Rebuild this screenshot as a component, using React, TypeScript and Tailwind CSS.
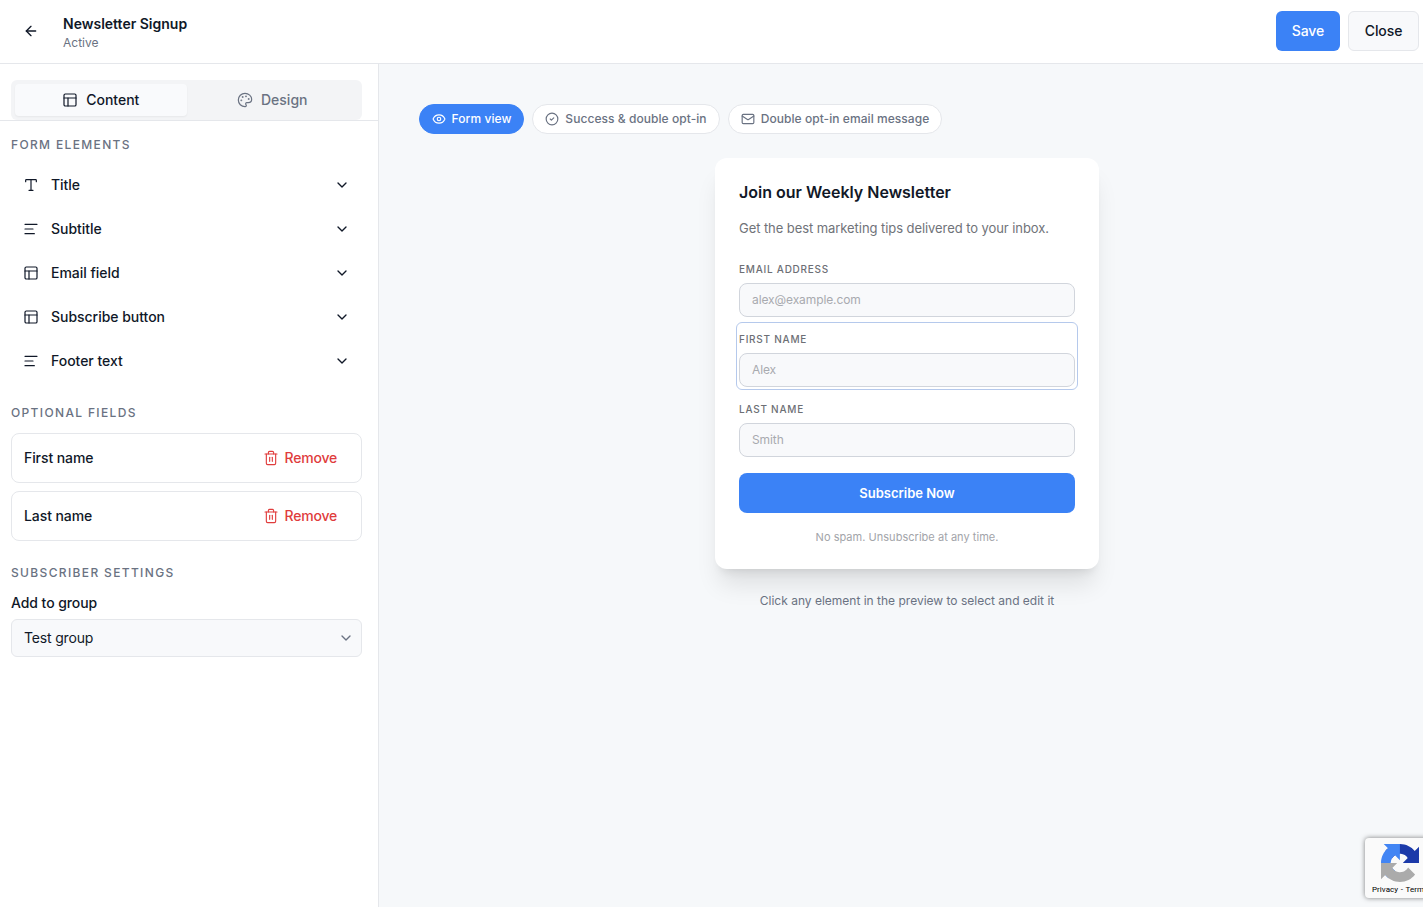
import { useState } from "react"
import {
	ArrowLeft,
	ChevronDown,
	CircleCheck,
	Eye,
	Mail,
	Palette,
	PanelsTopLeft,
	TextAlignStart,
	Trash2,
	Type,
} from "lucide-react"

const elements = [
	{ label: "Title", icon: Type },
	{ label: "Subtitle", icon: TextAlignStart },
	{ label: "Email field", icon: PanelsTopLeft },
	{ label: "Subscribe button", icon: PanelsTopLeft },
	{ label: "Footer text", icon: TextAlignStart },
]

const views = [
	{ label: "Form view", icon: Eye, width: "w-[105px]" },
	{ label: "Success & double opt-in", icon: CircleCheck, width: "w-[188px]" },
	{ label: "Double opt-in email message", icon: Mail, width: "w-[214px]" },
]

function SectionTitle({ children }: { children: React.ReactNode }) {
	return (
		<h2 className="text-xs leading-4 font-medium tracking-[1.35px] text-gray-500 uppercase">
			{children}
		</h2>
	)
}

function OptionalField({ label }: { label: string }) {
	return (
		<div className="flex h-[50px] items-center justify-between rounded-lg border border-gray-200 pr-6 pl-3">
			<span className="tracking-[-0.08px]">{label}</span>
			<button className="flex items-center gap-[5px] tracking-[-0.2px] text-[#e03c3c]">
				<Trash2 size={16} strokeWidth={1.7} />
				Remove
			</button>
		</div>
	)
}

function PreviewField({
	label,
	placeholder,
	active,
}: {
	label: string
	placeholder: string
	active?: boolean
}) {
	return (
		<div
			className={`-mx-[3px] h-[68px] rounded-md border px-[2px] pt-[9px] ${
				active ? "border-[#b5c9ec]" : "border-transparent"
			}`}
		>
			<div className="mb-[6px] text-[10px] leading-[15px] font-medium tracking-[0.75px] text-[#6d6f75] uppercase">
				{label}
			</div>
			<input
				className="block h-[34px] w-full rounded-lg border border-gray-300 bg-[#f8f9fb] px-3 pb-[2px] text-xs tracking-[-0.1px] outline-none placeholder:text-[#a8aaaf]"
				placeholder={placeholder}
			/>
		</div>
	)
}

function Recaptcha() {
	return (
		<div className="absolute top-[838px] left-[1365px] h-[60px] w-[70px] rounded-l-sm bg-[#fafafa] shadow-[0_0_5px_rgba(0,0,0,0.5)]">
			<svg className="absolute top-[6px] left-4" width="38" height="38" viewBox="0 0 64 64">
				<path
					fill="#1c3aa9"
					d="M64 31.955l-.033-1.37V4.687l-7.16 7.16C50.948 4.674 42.033.093 32.05.093c-10.4 0-19.622 4.96-25.458 12.64l11.736 11.86a15.55 15.55 0 0 1 4.754-5.334c2.05-1.6 4.952-2.906 8.968-2.906.485 0 .86.057 1.135.163 4.976.393 9.288 3.14 11.828 7.124l-8.307 8.307L64 31.953"
				/>
				<path
					fill="#4285f4"
					d="M31.862.094l-1.37.033H4.594l7.16 7.16C4.58 13.147 0 22.06 0 32.046c0 10.4 4.96 19.622 12.64 25.458L24.5 45.768a15.55 15.55 0 0 1-5.334-4.754c-1.6-2.05-2.906-4.952-2.906-8.968 0-.485.057-.86.163-1.135.393-4.976 3.14-9.288 7.124-11.828l8.307 8.307L31.86.095"
				/>
				<path
					fill="#ababab"
					d="M.001 32.045l.033 1.37v25.898l7.16-7.16c5.86 7.173 14.774 11.754 24.76 11.754 10.4 0 19.622-4.96 25.458-12.64l-11.736-11.86a15.55 15.55 0 0 1-4.754 5.334c-2.05 1.6-4.952 2.906-8.968 2.906-.485 0-.86-.057-1.135-.163-4.976-.393-9.288-3.14-11.828-7.124l8.307-8.307c-10.522.04-22.4.066-27.295-.005"
				/>
			</svg>
			<div className="absolute top-[46px] left-[7px] font-['Roboto',sans-serif] text-[8px] leading-[11px] tracking-[0.05px] whitespace-nowrap text-black">
				Privacy<span className="px-[0.5px]"> - </span>Terms
			</div>
		</div>
	)
}

export default function App() {
	const [tab, setTab] = useState("content")
	const [view, setView] = useState("Form view")

	return (
		<div className="relative flex h-[907px] w-full flex-col overflow-hidden bg-white font-['Inter',sans-serif] text-sm text-gray-900">
			<header className="flex h-16 shrink-0 items-center justify-between border-b border-gray-200 pr-1 pb-[2px] pl-[23px]">
				<div className="flex items-center gap-6">
					<button>
						<ArrowLeft size={16} />
					</button>
					<div className="pt-1">
						<h1 className="text-sm leading-5 font-semibold">Newsletter Signup</h1>
						<p className="text-xs leading-[17px] text-gray-500">Active</p>
					</div>
				</div>
				<div className="flex gap-2 font-medium">
					<button className="h-10 w-16 rounded-md bg-[#3b82f6] tracking-[-0.1px] text-white">
						Save
					</button>
					<button className="h-10 w-[71px] rounded-md border border-gray-200 bg-[#f8f9fb] tracking-[-0.1px]">
						Close
					</button>
				</div>
			</header>

			<div className="flex min-h-0 flex-1">
				<aside className="w-[379px] shrink-0 border-r border-gray-200 font-medium">
					<div className="h-[57px] border-b border-gray-200 pt-4 pr-4 pl-[11px]">
						<div className="grid h-10 grid-cols-2 rounded-md bg-gray-100 p-1">
							<button
								onClick={() => setTab("content")}
								className={`flex items-center justify-center gap-2 rounded ${
									tab === "content" ? "bg-[#f9fafc] shadow-xs" : "text-gray-500"
								}`}
							>
								<PanelsTopLeft size={16} strokeWidth={1.8} />
								Content
							</button>
							<button
								onClick={() => setTab("design")}
								className={`flex items-center justify-center gap-2 rounded ${
									tab === "design" ? "bg-[#f9fafc] shadow-xs" : "text-gray-500"
								}`}
							>
								<Palette size={16} strokeWidth={1.8} />
								Design
							</button>
						</div>
					</div>

					<div className="pt-4 pr-4 pl-[11px]">
						<SectionTitle>Form elements</SectionTitle>
						<div className="mt-[10px]">
							{elements.map(({ label, icon: Icon }) => (
								<button
									key={label}
									className="flex h-11 w-full items-center gap-3 px-3 tracking-[-0.03px]"
								>
									<Icon size={16} strokeWidth={1.8} />
									{label}
									<ChevronDown size={16} className="ml-auto" />
								</button>
							))}
						</div>

						<div className="mt-[22px]">
							<SectionTitle>Optional fields</SectionTitle>
							<div className="mt-3 flex flex-col gap-2">
								<OptionalField label="First name" />
								<OptionalField label="Last name" />
							</div>
						</div>

						<div className="mt-6">
							<SectionTitle>Subscriber settings</SectionTitle>
							<div className="mt-3 leading-5 tracking-[-0.07px]">Add to group</div>
							<button className="mt-[6px] flex h-[38px] w-full items-center justify-between rounded-md border border-gray-200 bg-[#f8f9fb] pr-[7px] pl-3 font-normal tracking-[-0.17px]">
								Test group
								<ChevronDown size={16} className="text-gray-500" />
							</button>
						</div>
					</div>
				</aside>

				<main className="flex-1 bg-[#f6f8fa] pt-10">
					<div className="flex gap-2 pl-10">
						{views.map(({ label, icon: Icon, width }) => (
							<button
								key={label}
								onClick={() => setView(label)}
								className={`flex h-[30px] items-center justify-center gap-[6px] rounded-full border text-xs font-medium tracking-[0.06px] whitespace-nowrap ${width} ${
									view === label
										? "border-[#3b82f6] bg-[#3b82f6] text-white"
										: "border-gray-200 bg-white text-gray-500"
								}`}
							>
								<Icon size={14} />
								{label}
							</button>
						))}
					</div>

					<div className="mx-auto mt-6 h-[411px] w-96 translate-x-[6px] rounded-xl bg-white px-6 pt-[22px] shadow-xl">
						<h3 className="text-base leading-6 font-semibold text-[#111827]">
							Join our Weekly Newsletter
						</h3>
						<p className="mt-[14px] text-[13px] leading-[21px] tracking-[-0.07px] text-[#707379]">
							Get the best marketing tips delivered to your inbox.
						</p>
						<div className="mt-[13px] flex flex-col gap-[2px]">
							<PreviewField label="Email address" placeholder="alex@example.com" />
							<PreviewField label="First name" placeholder="Alex" active />
							<PreviewField label="Last name" placeholder="Smith" />
						</div>
						<button className="mt-[13px] h-10 w-full rounded-lg bg-[#3b82f6] text-[13px] font-semibold text-white">
							Subscribe Now
						</button>
						<p className="mt-4 text-center text-[11px] leading-4 tracking-[0.03px] text-[#a2a4a9]">
							No spam. Unsubscribe at any time.
						</p>
					</div>
					<p className="mt-6 translate-x-[6px] text-center text-xs leading-4 text-gray-500">
						Click any element in the preview to select and edit it
					</p>
				</main>
			</div>

			<Recaptcha />
		</div>
	)
}
